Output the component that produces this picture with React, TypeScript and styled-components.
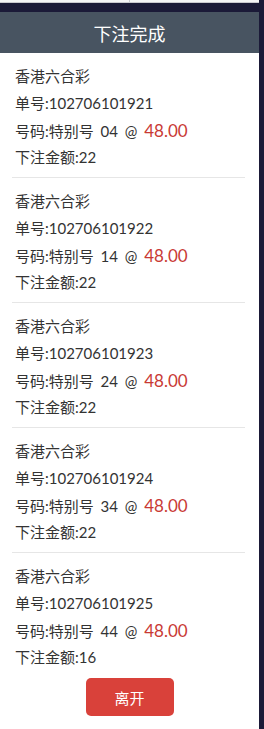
import React from "react";
import styled, { createGlobalStyle } from "styled-components";

const Global = createGlobalStyle`
  html, body { margin: 0; padding: 0; }
  body {
    background: #1b1a38;
    font-family: Lato, "Noto Sans CJK SC", sans-serif;
    min-height: 729px;
  }
`;

const Page = styled.div`
  width: 259px;
  min-height: 729px;
  display: flex;
  flex-direction: column;
`;

const TopStrip = styled.div`
  height: 3px;
  display: flex;
  background: #f4f4f6;
  border-bottom: 1px solid #c9c9cf;
  box-sizing: border-box;
`;

const TopHalf = styled.div`
  flex: 1;
  border-right: 1px solid #c9c9cf;
  &:last-child { border-right: none; }
`;

const Gap = styled.div`
  height: 9px;
`;

const Header = styled.div`
  height: 41px;
  background: #485461;
  color: #fff;
  font-size: 18px;
  display: flex;
  align-items: center;
  justify-content: center;
  font-family: "Noto Sans CJK SC", sans-serif;
`;

const Body = styled.div`
  flex: 1;
  background: #fff;
  display: flex;
  flex-direction: column;
`;

const Block = styled.div<{ $last?: boolean }>`
  margin: 0 14px 0 12px;
  padding: 10px 0 6px 3px;
  border-bottom: ${(p) => (p.$last ? "none" : "1px solid #e6e6e6")};
`;

const Line = styled.div`
  font-size: 15px;
  line-height: 27px;
  height: 27px;
  color: #333;
  white-space: nowrap;
  word-spacing: 3px;
`;

const Odds = styled.span`
  color: #c93a35;
  font-size: 17px;
`;

const Actions = styled.div`
  display: flex;
  justify-content: center;
  padding: 1px 0 13px;
`;

const Button = styled.button`
  width: 88px;
  height: 38px;
  border: none;
  border-radius: 5px;
  background: #d9413a;
  color: #fff;
  font-size: 15px;
  font-family: "Noto Sans CJK SC", sans-serif;
  cursor: pointer;
`;

const bets = [
  { id: "102706101921", num: "04", amt: "22" },
  { id: "102706101922", num: "14", amt: "22" },
  { id: "102706101923", num: "24", amt: "22" },
  { id: "102706101924", num: "34", amt: "22" },
  { id: "102706101925", num: "44", amt: "16" },
];

export default function App() {
  return (
    <>
      <Global />
      <Page>
        <TopStrip>
          <TopHalf />
          <TopHalf />
        </TopStrip>
        <Gap />
        <Header>下注完成</Header>
        <Body>
          {bets.map((b, i) => (
            <Block key={b.id} $last={i === bets.length - 1}>
              <Line>香港六合彩</Line>
              <Line>单号:{b.id}</Line>
              <Line>
                号码:特别号 {b.num} @ <Odds>48.00</Odds>
              </Line>
              <Line>下注金额:{b.amt}</Line>
            </Block>
          ))}
          <Actions>
            <Button>离开</Button>
          </Actions>
        </Body>
      </Page>
    </>
  );
}
